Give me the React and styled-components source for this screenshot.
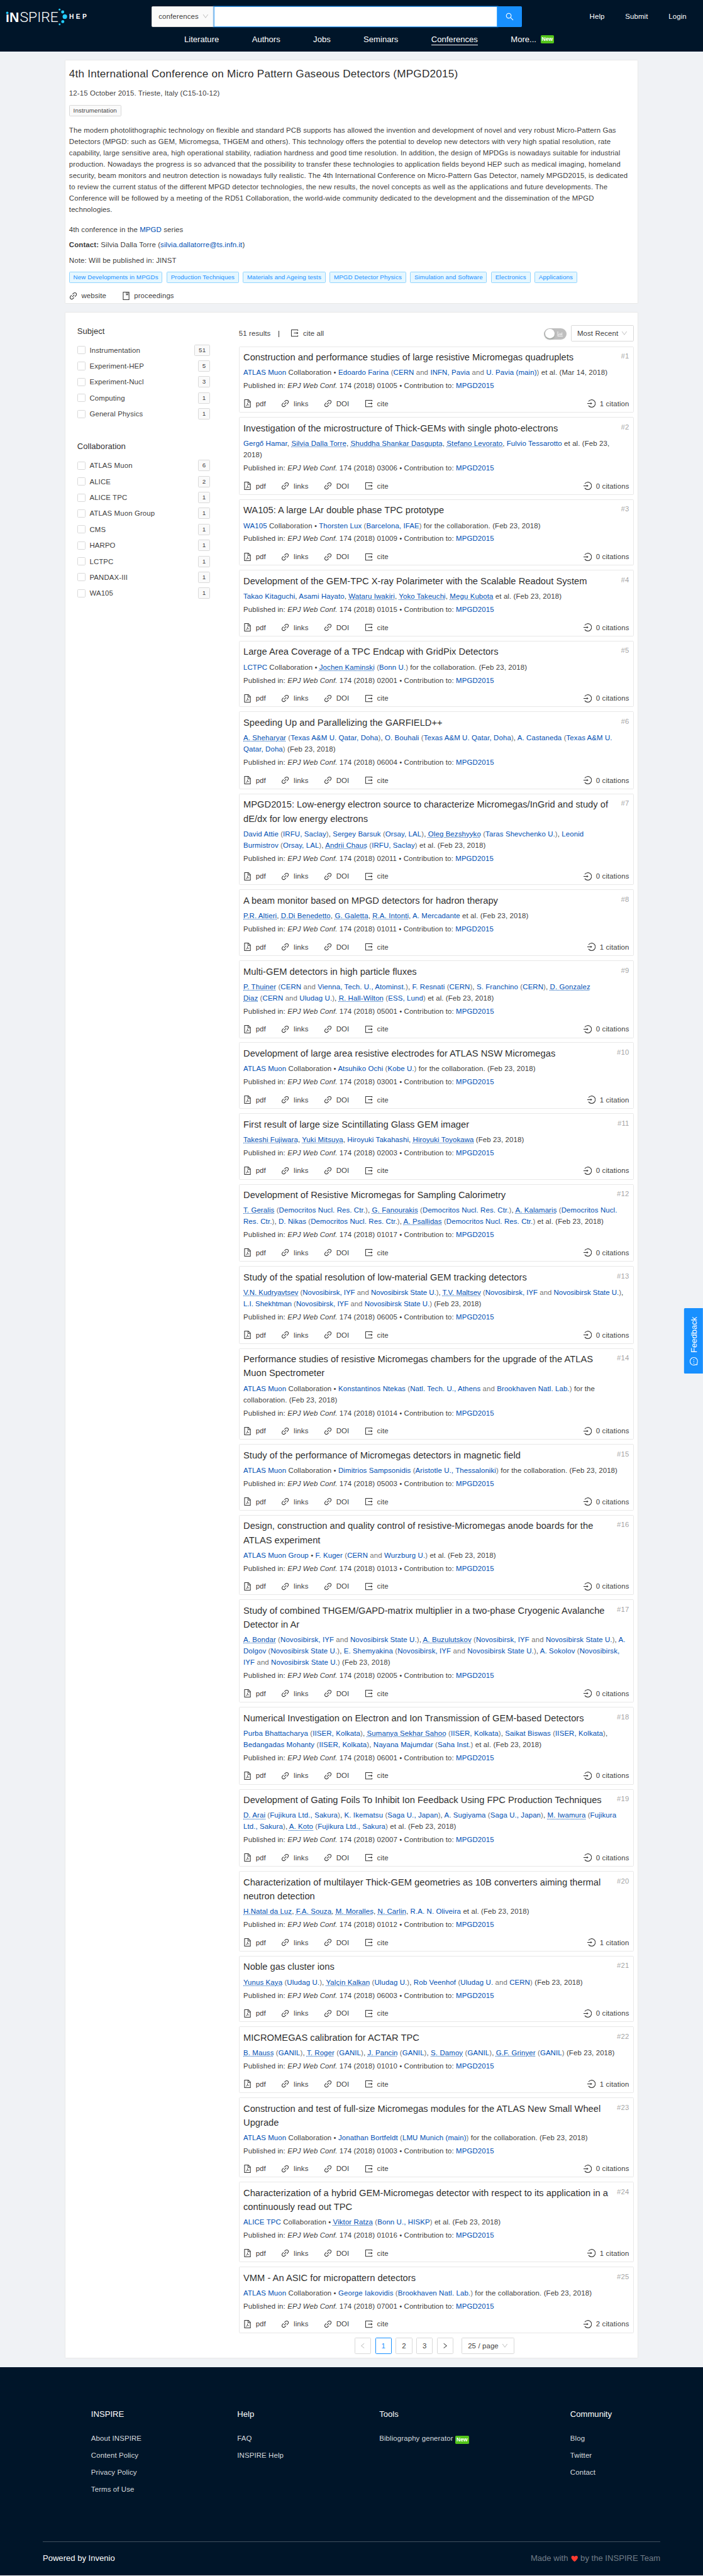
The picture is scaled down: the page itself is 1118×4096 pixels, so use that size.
import React from 'react';
import styled, { createGlobalStyle, css } from 'styled-components';
import {
  AiOutlineBarChart,
  AiOutlineBook,
  AiOutlineDown,
  AiOutlineFilePdf,
  AiOutlineLeft,
  AiOutlineLink,
  AiOutlineMessage,
  AiOutlineRight,
  AiOutlineSearch,
} from 'react-icons/ai';

const GlobalStyle = createGlobalStyle`
  html { background: #001529; }
  body { margin: 0; }
  *, *::before, *::after { box-sizing: border-box; }
`;

const text = 'rgba(0, 0, 0, 0.8)';
const heading = 'rgba(0, 0, 0, 0.85)';
const link = '#0050b3';
const navy = '#001529';
const primary = '#1890ff';

const Page = styled.div`
  zoom: 0.8185;
  position: relative;
  height: 5004px;
  overflow: hidden;
  background: #f0f2f5;
  color: ${text};
  font-family: 'Liberation Sans', Arial, sans-serif;
  font-size: 14px;
  letter-spacing: 0.13px;
  line-height: 22px;
`;

/* ---------- icons ---------- */

const iconBox = '64 64 896 896';
const cropped = (Icon) => () => <Icon viewBox={iconBox} />;

const ChartIcon = cropped(AiOutlineBarChart);
const BookIcon = cropped(AiOutlineBook);
const DownIcon = cropped(AiOutlineDown);
const PdfIcon = cropped(AiOutlineFilePdf);
const LeftIcon = cropped(AiOutlineLeft);
const LinkIcon = cropped(AiOutlineLink);
const MessageIcon = cropped(AiOutlineMessage);
const RightIcon = cropped(AiOutlineRight);
const SearchIcon = cropped(AiOutlineSearch);

const CiteIcon = () => (
  <svg viewBox={iconBox} fill="currentColor">
    <path d="M888.3 757.4h-53.8c-4.2 0-7.7 3.5-7.7 7.7v61.8H197.1V197.1h629.8v61.8c0 4.2 3.5 7.7 7.7 7.7h53.8c4.2 0 7.7-3.4 7.7-7.7V158.7c0-17-13.7-30.7-30.7-30.7H158.7c-17 0-30.7 13.7-30.7 30.7v706.6c0 17 13.7 30.7 30.7 30.7h706.6c17 0 30.7-13.7 30.7-30.7V765.1c0-4.3-3.5-7.7-7.7-7.7z" />
    <path d="M906.9 505.7L765 393.7c-5.3-4.2-13-.4-13 6.3v76H438c-4.4 0-8 3.6-8 8v56c0 4.4 3.6 8 8 8h314v76c0 6.7 7.8 10.5 13 6.3l141.9-112a8 8 0 0 0 0-12.6z" />
  </svg>
);

const CitationsIcon = () => (
  <svg viewBox="0 0 16 16" fill="none" stroke="currentColor" strokeWidth="1.35">
    <path d="M2.4 4A7.2 7.2 0 1 1 2.4 12" />
    <path d="M0 8h7" />
    <path d="M6.6 5.8L9.500 8 6.600 10.200z" fill="currentColor" stroke="none" />
  </svg>
);

/* ---------- header ---------- */

const Header = styled.header`
  display: grid;
  grid-template-columns: 295px 719px 1fr;
  grid-template-rows: 40px 1fr;
  height: 100px;
  padding-top: 12px;
  background: ${navy};
  color: #fff;
`;

const Logo = styled.svg`
  display: block;
  width: 180px;
  height: 60px;
  margin-top: -12px;
  letter-spacing: 0;
`;

const SearchBar = styled.form`
  display: flex;
  height: 40px;
`;

const ScopeSelect = styled.div`
  display: flex;
  align-items: center;
  justify-content: space-between;
  width: 121px;
  padding: 0 10px 0 12px;
  border: 1px solid #d9d9d9;
  border-radius: 2px 0 0 2px;
  background: #fafafa;
  color: ${text};
  svg { color: rgba(0, 0, 0, 0.25); font-size: 12px; }
`;

const SearchInput = styled.input`
  flex: 1;
  min-width: 0;
  border: 1px solid #40a9ff;
  outline: none;
  background: #fff;
  box-shadow: 0 0 0 2px rgba(24, 144, 255, 0.2);
`;

const SearchButton = styled.button`
  display: flex;
  align-items: center;
  justify-content: center;
  width: 48px;
  border: 0;
  border-radius: 0 2px 2px 0;
  background: ${primary};
  color: #fff;
  font-size: 16px;
`;

const UserLinks = styled.div`
  display: flex;
  justify-content: flex-end;
  align-items: center;
  gap: 40px;
  padding-right: 32px;
`;

const Nav = styled.nav`
  grid-column: 2;
  display: flex;
  gap: 64px;
  padding: 13.6px 0 0 63px;
  font-size: 16px;
  letter-spacing: 0;
  white-space: nowrap;
`;

const NavItem = styled.span`
  height: 22px;
  ${(p) => p.$active && css`border-bottom: 2px solid #fff;`}
`;

const NewTag = styled.span`
  display: inline-block;
  height: 16px;
  margin-left: ${(p) => p.$gap || 4}px;
  padding: 0 2.5px;
  border-radius: 2px;
  background: #52c41a;
  color: #fff;
  font-size: 10.6px;
  font-weight: 700;
  letter-spacing: 0;
  line-height: 16px;
  vertical-align: ${(p) => p.$shift || 0}px;
`;

/* ---------- shared ---------- */

const Panel = styled.section`
  margin: 16px 125.5px 0;
  border: 1px solid #e8e8e8;
  border-radius: 2px;
  background: #fff;
`;

const Link = styled.a`
  color: ${link};
  ${(p) => p.$dotted && css`text-decoration: underline dotted;`}
`;

const Tag = styled.span`
  display: inline-block;
  height: 22px;
  padding: 0 7px;
  border: 1px solid ${(p) => (p.$blue ? '#91d5ff' : '#d9d9d9')};
  border-radius: 2px;
  background: ${(p) => (p.$blue ? '#e6f7ff' : '#fafafa')};
  color: ${(p) => (p.$blue ? primary : text)};
  font-size: 12px;
  line-height: 19.5px;
  white-space: nowrap;
`;

const IconLabel = styled.span`
  display: inline-flex;
  align-items: center;
  gap: 8px;
  white-space: nowrap;
  svg { width: 16px; height: 16px; }
`;

/* ---------- conference ---------- */

const Conference = styled(Panel)`
  height: 474.5px;
  padding: 11.8px 7.5px 0;
`;

const ConferenceTitle = styled.h1`
  margin: 0;
  color: ${heading};
  font-size: 21px;
  font-weight: 400;
  letter-spacing: 0.22px;
  line-height: 28px;
`;

const Row = styled.div`
  display: flex;
  gap: ${(p) => p.$gap || 0}px;
  margin-top: ${(p) => p.$top}px;
`;

const Line = styled.p`
  margin: ${(p) => p.$top}px 0 0;
`;

/* ---------- results panel ---------- */

const ResultsPanel = styled(Panel)`
  display: flex;
  gap: 56px;
  height: 3975.3px;
  padding: 23.8px 8px 0 23.3px;
`;

const Sidebar = styled.aside`
  width: 258px;
  flex: none;
`;

const FacetTitle = styled.h2`
  margin: ${(p) => p.$top}px 0 14.6px;
  color: ${heading};
  font-size: 16px;
  font-weight: 400;
  letter-spacing: 0;
  line-height: 22px;
`;

const FacetItem = styled.label`
  display: flex;
  align-items: center;
  height: 22px;
  margin-bottom: 9px;
`;

const Checkbox = styled.span`
  width: 16px;
  height: 16px;
  margin-right: 8px;
  border: 1px solid #d9d9d9;
  border-radius: 2px;
  background: #fff;
`;

const FacetName = styled.span`
  flex: 1;
`;

const Results = styled.div`
  flex: 1;
  min-width: 0;
`;

const Toolbar = styled.div`
  display: flex;
  align-items: center;
  height: 32px;
  margin-bottom: 9.2px;
`;

const Divider = styled.i`
  width: 1px;
  height: 12.6px;
  margin: 2px 23px 0 15px;
  background: ${text};
`;

const Switch = styled.span`
  display: flex;
  align-items: center;
  justify-content: space-between;
  width: 44px;
  height: 22px;
  margin: 2px 8px 0 auto;
  padding: 0 7px 0 2px;
  border-radius: 11px;
  background: #bfbfbf;
  color: #fff;
  font-size: 12px;
  &::before {
    content: '';
    width: 18px;
    height: 18px;
    border-radius: 50%;
    background: #fff;
    box-shadow: 0 2px 4px rgba(0, 35, 11, 0.2);
  }
`;

const Select = styled.div`
  display: flex;
  align-items: center;
  justify-content: space-between;
  width: ${(p) => p.$width}px;
  height: 32px;
  padding: 0 11px;
  border: 1px solid #d9d9d9;
  border-radius: 2px;
  white-space: nowrap;
  svg { color: rgba(0, 0, 0, 0.25); font-size: 12px; }
`;

const Card = styled.article`
  height: ${(p) => p.$height}px;
  margin-bottom: 8.5px;
  padding: 7px 7.6px 0;
  border: 1px solid #e8e8e8;
  border-radius: 2px;
`;

const CardHead = styled.div`
  display: flex;
  justify-content: space-between;
  gap: 14px;
`;

const CardTitle = styled.h3`
  margin: 0;
  color: ${heading};
  font-size: 18px;
  font-weight: 400;
  letter-spacing: 0;
  line-height: 27px;
`;

const Rank = styled.span`
  color: rgba(0, 0, 0, 0.4);
`;

const Authors = styled.div`
  margin-top: 5px;
  margin-right: -3px;
  white-space: pre-line;
  ${(p) => p.$tight && css`letter-spacing: 0;`}
`;

const Affiliation = styled.span`
  color: rgba(0, 0, 0, 0.6);
`;

const Published = styled.div`
  margin-top: 3.6px;
`;

const Actions = styled.div`
  display: flex;
  height: 22px;
  margin-top: 13px;
`;

const Action = styled(IconLabel)`
  margin-right: ${(p) => p.$after || 0}px;
  &:last-child { margin-left: auto; }
`;

const Pagination = styled.div`
  display: flex;
  gap: 8px;
  padding-left: 225px;
`;

const PageButton = styled.span`
  display: flex;
  align-items: center;
  justify-content: center;
  width: 32px;
  height: 32px;
  border: 1px solid ${(p) => (p.$active ? primary : '#d9d9d9')};
  border-radius: 2px;
  color: ${(p) => (p.$active ? primary : p.$disabled ? 'rgba(0,0,0,.25)' : text)};
  svg { font-size: 12px; }
  &:nth-child(5) { margin-right: 8px; }
`;

/* ---------- feedback & footer ---------- */

const Feedback = styled.button`
  position: absolute;
  top: 2587px;
  right: -45px;
  display: flex;
  align-items: center;
  justify-content: center;
  gap: 8px;
  width: 127px;
  height: 37px;
  padding: 0;
  border: 0;
  border-radius: 2px 2px 0 0;
  background: ${primary};
  color: #fff;
  font: 16px 'Liberation Sans', Arial, sans-serif;
  transform: rotate(-90deg);
  svg { width: 16px; height: 16px; }
`;

const Footer = styled.footer`
  height: 405px;
  margin-top: 16.7px;
  padding: 81px 83px 0;
  background: ${navy};
  color: #fff;
`;

const FooterColumns = styled.div`
  display: grid;
  grid-template-columns: 284px 276px 371px 1fr;
  height: 259px;
  padding-left: 94px;
  border-bottom: 1px solid rgba(255, 255, 255, 0.25);
`;

const FooterTitle = styled.h2`
  margin: 0 0 24.5px;
  font-size: 16px;
  font-weight: 400;
  letter-spacing: 0;
  line-height: 22px;
`;

const FooterLink = styled.div`
  margin-bottom: 11px;
  color: rgba(255, 255, 255, 0.85);
`;

const FooterBottom = styled.div`
  display: flex;
  justify-content: space-between;
  padding-top: 21px;
  font-size: 16px;
  letter-spacing: 0;
`;

const Muted = styled.span`
  color: rgba(255, 255, 255, 0.45);
`;

const Heart = styled.svg`
  width: 14px;
  height: 13px;
  margin: 0 5px;
  vertical-align: -1px;
`;

/* ---------- data ---------- */

const abstract =
  'The modern photolithographic technology on flexible and standard PCB supports has allowed the invention and development of novel and very robust Micro-Pattern Gas Detectors (MPGD: such as GEM, Micromegsa, THGEM and others). This technology offers the potential to develop new detectors with very high spatial resolution, rate capability, large sensitive area, high operational stability, radiation hardness and good time resolution. In addition, the design of MPDGs is nowadays suitable for industrial production. Nowadays the progress is so advanced that the possibility to transfer these technologies to application fields beyond HEP such as medical imaging, homeland security, beam monitors and neutron detection is nowadays fully realistic. The 4th International Conference on Micro-Pattern Gas Detector, namely MPGD2015, is dedicated to review the current status of the different MPGD detector technologies, the new results, the novel concepts as well as the applications and future developments. The Conference will be followed by a meeting of the RD51 Collaboration, the world-wide community dedicated to the development and the dissemination of the MPGD technologies.';

const keywords = [
  'New Developments in MPGDs', 'Production Techniques', 'Materials and Ageing tests',
  'MPGD Detector Physics', 'Simulation and Software', 'Electronics', 'Applications',
];

const facets = [
  { title: 'Subject', items: [['Instrumentation', 51], ['Experiment-HEP', 5], ['Experiment-Nucl', 3], ['Computing', 1], ['General Physics', 1]] },
  {
    title: 'Collaboration',
    items: [['ATLAS Muon', 6], ['ALICE', 2], ['ALICE TPC', 1], ['ATLAS Muon Group', 1], ['CMS', 1], ['HARPO', 1], ['LCTPC', 1], ['PANDAX-III', 1], ['WA105', 1]],
  },
];

const NSK = ['Novosibirsk, IYF', 'Novosibirsk State U.'];
const DEM = ['Democritos Nucl. Res. Ctr.'];
const QATAR = ['Texas A&M U. Qatar, Doha'];
const KOL = ['IISER, Kolkata'];
const FUJ = ['Fujikura Ltd., Sakura'];
const SAGA = ['Saga U., Japan'];
const ETAL = 'et al.';
const FOR = 'for the collaboration.';

// Author names that start with "*" carry a dotted underline.
// tl / al: number of lines taken by the title and by the authors.
const papers = [
  { t: 'Construction and performance studies of large resistive Micromegas quadruplets', c: 'ATLAS Muon', a: [['Edoardo Farina', ['CERN', 'INFN, Pavia', 'U. Pavia (main)']]], s: ETAL, d: 'Mar 14, 2018', p: '01005', n: 1 },
  { t: 'Investigation of the microstructure of Thick-GEMs with single photo-electrons', a: [['Gergő Hamar'], ['*Silvia Dalla Torre'], ['*Shuddha Shankar Dasgupta'], ['*Stefano Levorato'], ['Fulvio Tessarotto']], s: ETAL, d: 'Feb 23,\n2018', p: '03006', n: 0, al: 2 },
  { t: 'WA105: A large LAr double phase TPC prototype', c: 'WA105', a: [['Thorsten Lux', ['Barcelona, IFAE']]], s: FOR, p: '01009', n: 0 },
  { t: 'Development of the GEM-TPC X-ray Polarimeter with the Scalable Readout System', a: [['Takao Kitaguchi'], ['Asami Hayato'], ['*Wataru Iwakiri'], ['*Yoko Takeuchi'], ['*Megu Kubota']], s: ETAL, p: '01015', n: 0 },
  { t: 'Large Area Coverage of a TPC Endcap with GridPix Detectors', c: 'LCTPC', a: [['*Jochen Kaminski', ['Bonn U.']]], s: FOR, p: '02001', n: 0 },
  { t: 'Speeding Up and Parallelizing the GARFIELD++', a: [['*A. Sheharyar', QATAR], ['O. Bouhali', QATAR], ['A. Castaneda', QATAR]], p: '06004', n: 0, al: 2 },
  { t: 'MPGD2015: Low-energy electron source to characterize Micromegas/InGrid and study of dE/dx for low energy electrons', a: [['David Attie', ['IRFU, Saclay']], ['Sergey Barsuk', ['Orsay, LAL']], ['*Oleg Bezshyyko', ['Taras Shevchenko U.']], ['Leonid Burmistrov', ['Orsay, LAL']], ['*Andrii Chaus', ['IRFU, Saclay']]], s: ETAL, p: '02011', n: 0, tl: 2, al: 2 },
  { t: 'A beam monitor based on MPGD detectors for hadron therapy', a: [['*P.R. Altieri'], ['*D.Di Benedetto'], ['*G. Galetta'], ['*R.A. Intonti'], ['A. Mercadante']], s: ETAL, p: '01011', n: 1 },
  { t: 'Multi-GEM detectors in high particle fluxes', a: [['*P. Thuiner', ['CERN', 'Vienna, Tech. U., Atominst.']], ['F. Resnati', ['CERN']], ['S. Franchino', ['CERN']], ['*D. Gonzalez Diaz', ['CERN', 'Uludag U.']], ['*R. Hall-Wilton', ['ESS, Lund']]], s: ETAL, p: '05001', n: 0, al: 2 },
  { t: 'Development of large area resistive electrodes for ATLAS NSW Micromegas', c: 'ATLAS Muon', a: [['Atsuhiko Ochi', ['Kobe U.']]], s: FOR, p: '03001', n: 1 },
  { t: 'First result of large size Scintillating Glass GEM imager', a: [['*Takeshi Fujiwara'], ['*Yuki Mitsuya'], ['Hiroyuki Takahashi'], ['*Hiroyuki Toyokawa']], p: '02003', n: 0 },
  { t: 'Development of Resistive Micromegas for Sampling Calorimetry', a: [['*T. Geralis', DEM], ['*G. Fanourakis', DEM], ['*A. Kalamaris', DEM], ['D. Nikas', DEM], ['*A. Psallidas', DEM]], s: ETAL, p: '01017', n: 0, al: 2 },
  { t: 'Study of the spatial resolution of low-material GEM tracking detectors', a: [['*V.N. Kudryavtsev', NSK], ['*T.V. Maltsev', NSK], ['L.I. Shekhtman', NSK]], p: '06005', n: 0, al: 2, tight: true },
  { t: 'Performance studies of resistive Micromegas chambers for the upgrade of the ATLAS Muon Spectrometer', c: 'ATLAS Muon', a: [['Konstantinos Ntekas', ['Natl. Tech. U., Athens', 'Brookhaven Natl. Lab.']]], s: FOR, p: '01014', n: 0, tl: 2, al: 2 },
  { t: 'Study of the performance of Micromegas detectors in magnetic field', c: 'ATLAS Muon', a: [['Dimitrios Sampsonidis', ['Aristotle U., Thessaloniki']]], s: FOR, p: '05003', n: 0 },
  { t: 'Design, construction and quality control of resistive-Micromegas anode boards for the ATLAS experiment', g: 'ATLAS Muon Group', a: [['F. Kuger', ['CERN', 'Wurzburg U.']]], s: ETAL, p: '01013', n: 0, tl: 2 },
  { t: 'Study of combined THGEM/GAPD-matrix multiplier in a two-phase Cryogenic Avalanche Detector in Ar', a: [['*A. Bondar', NSK], ['*A. Buzulutskov', NSK], ['A. Dolgov', ['Novosibirsk State U.']], ['E. Shemyakina', NSK], ['A. Sokolov', NSK]], p: '02005', n: 0, tl: 2, al: 3 },
  { t: 'Numerical Investigation on Electron and Ion Transmission of GEM-based Detectors', a: [['Purba Bhattacharya', KOL], ['*Sumanya Sekhar Sahoo', KOL], ['Saikat Biswas', KOL], ['Bedangadas Mohanty', KOL], ['Nayana Majumdar', ['Saha Inst.']]], s: ETAL, p: '06001', n: 0, al: 2 },
  { t: 'Development of Gating Foils To Inhibit Ion Feedback Using FPC Production Techniques', a: [['*D. Arai', FUJ], ['K. Ikematsu', SAGA], ['A. Sugiyama', SAGA], ['*M. Iwamura', FUJ], ['*A. Koto', FUJ]], s: ETAL, p: '02007', n: 0, al: 2 },
  { t: 'Characterization of multilayer Thick-GEM geometries as 10B converters aiming thermal neutron detection', a: [['*H.Natal da Luz'], ['*F.A. Souza'], ['*M. Moralles'], ['*N. Carlin'], ['R.A. N. Oliveira']], s: ETAL, p: '01012', n: 1, tl: 2 },
  { t: 'Noble gas cluster ions', a: [['*Yunus Kaya', ['Uludag U.']], ['*Yalçin Kalkan', ['Uludag U.']], ['Rob Veenhof', ['Uludag U.', 'CERN']]], p: '06003', n: 0 },
  { t: 'MICROMEGAS calibration for ACTAR TPC', a: [['*B. Mauss', ['GANIL']], ['*T. Roger', ['GANIL']], ['*J. Pancin', ['GANIL']], ['*S. Damoy', ['GANIL']], ['*G.F. Grinyer', ['GANIL']]], p: '01010', n: 1 },
  { t: 'Construction and test of full-size Micromegas modules for the ATLAS New Small Wheel Upgrade', c: 'ATLAS Muon', a: [['Jonathan Bortfeldt', ['LMU Munich (main)']]], s: FOR, p: '01003', n: 0, tl: 2 },
  { t: 'Characterization of a hybrid GEM-Micromegas detector with respect to its application in a continuously read out TPC', c: 'ALICE TPC', a: [['*Viktor Ratza', ['Bonn U., HISKP']]], s: ETAL, p: '01016', n: 1, tl: 2 },
  { t: 'VMM - An ASIC for micropattern detectors', c: 'ATLAS Muon', a: [['George Iakovidis', ['Brookhaven Natl. Lab.']]], s: FOR, p: '07001', n: 2 },
];

const footerColumns = [
  ['INSPIRE', ['About INSPIRE', 'Content Policy', 'Privacy Policy', 'Terms of Use']],
  ['Help', ['FAQ', 'INSPIRE Help']],
  ['Tools', ['Bibliography generator']],
  ['Community', ['Blog', 'Twitter', 'Contact']],
];

/* ---------- components ---------- */

function InspireLogo() {
  return (
    <Logo viewBox="0 0 180 60">
      <g fill="#fff" fontFamily="'Liberation Sans', Arial, sans-serif">
        <text x="11" y="42.6" fontSize="26.5" fontWeight="700" textLength="26" lengthAdjust="spacingAndGlyphs">iN</text>
        <text x="38.5" y="42.6" fontSize="27" fontWeight="300" fontFamily="Roboto, sans-serif" textLength="75" lengthAdjust="spacingAndGlyphs">SPIRE</text>
        <text x="134.4" y="36.7" fontSize="12.6" fontWeight="700" textLength="34" lengthAdjust="spacing">HEP</text>
      </g>
      <rect x="11" y="22" width="6.4" height="5.8" fill={navy} />
      <g fill="#22ccff">
        <circle cx="14.1" cy="25" r="2.3" />
        <circle cx="115.7" cy="18.6" r="1.8" />
        <circle cx="121.8" cy="23.3" r="3" />
        <circle cx="126" cy="32.3" r="4.4" />
        <circle cx="122" cy="42" r="3" />
        <circle cx="115.8" cy="47.4" r="1.8" />
      </g>
    </Logo>
  );
}

function Author({ name, affiliations }) {
  const dotted = name.startsWith('*');
  return (
    <>
      <Link $dotted={dotted}>{dotted ? name.slice(1) : name}</Link>
      {affiliations && (
        <Affiliation>
          {'\u00a0('}
          {affiliations.map((item, i) => (
            <React.Fragment key={item}>
              {i > 0 && ' and '}
              <Link>{item}</Link>
            </React.Fragment>
          ))}
          )
        </Affiliation>
      )}
    </>
  );
}

function Paper({ paper, rank }) {
  const { t, c, g, a, s, d = 'Feb 23, 2018', p, n, tl = 1, al = 1, tight } = paper;
  return (
    <Card $height={129 + (tl - 1) * 27 + (al - 1) * 22}>
      <CardHead>
        <CardTitle>{t}</CardTitle>
        <Rank>#{rank}</Rank>
      </CardHead>
      <Authors $tight={tight}>
        {c && <><Link>{c}</Link> Collaboration • </>}
        {g && <><Link>{g}</Link> • </>}
        {a.map(([name, affiliations], i) => (
          <React.Fragment key={name}>
            {i > 0 && ', '}
            <Author name={name} affiliations={affiliations} />
          </React.Fragment>
        ))}
        {s && ` ${s}`} ({d})
      </Authors>
      <Published>
        Published in: <em>EPJ Web Conf.</em> 174 (2018) {p} • Contribution to: <Link>MPGD2015</Link>
      </Published>
      <Actions>
        <Action $after={30}><PdfIcon />pdf</Action>
        <Action $after={30}><LinkIcon />links</Action>
        <Action $after={30}><LinkIcon />DOI</Action>
        <Action><CiteIcon />cite</Action>
        <Action><CitationsIcon />{`${n} ${n === 1 ? 'citation' : 'citations'}`}</Action>
      </Actions>
    </Card>
  );
}

export default function App() {
  return (
    <Page>
      <GlobalStyle />
      <Header>
        <InspireLogo />
        <SearchBar>
          <ScopeSelect>conferences<DownIcon /></ScopeSelect>
          <SearchInput />
          <SearchButton type="button"><SearchIcon /></SearchButton>
        </SearchBar>
        <UserLinks><span>Help</span><span>Submit</span><span>Login</span></UserLinks>
        <Nav>
          <NavItem>Literature</NavItem>
          <NavItem>Authors</NavItem>
          <NavItem>Jobs</NavItem>
          <NavItem>Seminars</NavItem>
          <NavItem $active>Conferences</NavItem>
          <NavItem>More...<NewTag $gap={8} $shift={2}>New</NewTag></NavItem>
        </Nav>
      </Header>

      <Conference>
        <ConferenceTitle>4th International Conference on Micro Pattern Gaseous Detectors (MPGD2015)</ConferenceTitle>
        <Line $top={13}>12-15 October 2015. Trieste, Italy (C15-10-12)</Line>
        <Row $top={12}><Tag>Instrumentation</Tag></Row>
        <Line $top={16.5}>{abstract}</Line>
        <Line $top={16}>4th conference in the <Link>MPGD</Link> series</Line>
        <Line $top={8}><b>Contact:</b> Silvia Dalla Torre (<Link>silvia.dallatorre@ts.infn.it</Link>)</Line>
        <Line $top={8}>Note: Will be published in: JINST</Line>
        <Row $top={11.5} $gap={8}>{keywords.map((k) => <Tag key={k} $blue>{k}</Tag>)}</Row>
        <Row $top={13.5} $gap={30}>
          <IconLabel><LinkIcon />website</IconLabel>
          <IconLabel><BookIcon />proceedings</IconLabel>
        </Row>
      </Conference>

      <ResultsPanel>
        <Sidebar>
          {facets.map((facet, i) => (
            <div key={facet.title}>
              <FacetTitle $top={i ? 42 : 1}>{facet.title}</FacetTitle>
              {facet.items.map(([name, count]) => (
                <FacetItem key={name}>
                  <Checkbox />
                  <FacetName>{name}</FacetName>
                  <Tag>{count}</Tag>
                </FacetItem>
              ))}
            </div>
          ))}
        </Sidebar>
        <Results>
          <Toolbar>
            <span>51 results</span>
            <Divider />
            <IconLabel><CiteIcon />cite all</IconLabel>
            <Switch><ChartIcon /></Switch>
            <Select $width={122}>Most Recent<DownIcon /></Select>
          </Toolbar>
          {papers.map((paper, i) => <Paper key={paper.p} paper={paper} rank={i + 1} />)}
          <Pagination>
            <PageButton $disabled><LeftIcon /></PageButton>
            <PageButton $active>1</PageButton>
            <PageButton>2</PageButton>
            <PageButton>3</PageButton>
            <PageButton><RightIcon /></PageButton>
            <Select $width={102}>25 / page<DownIcon /></Select>
          </Pagination>
        </Results>
      </ResultsPanel>

      <Footer>
        <FooterColumns>
          {footerColumns.map(([title, links]) => (
            <div key={title}>
              <FooterTitle>{title}</FooterTitle>
              {links.map((item) => (
                <FooterLink key={item}>
                  {item}
                  {title === 'Tools' && <NewTag $shift={-1}>New</NewTag>}
                </FooterLink>
              ))}
            </div>
          ))}
        </FooterColumns>
        <FooterBottom>
          <span>Powered by Invenio</span>
          <Muted>
            Made with
            <Heart viewBox="0 0 14 13">
              <path fill="#ff3b30" d="M7 12.6C4.5 10.4.6 7.5.6 4.2.6 2.1 2 .8 3.7.8 5.2.8 6.4 1.7 7 3 7.6 1.7 8.800.8 10.300.8 12 .8 13.400 2.100 13.400 4.200 13.400 7.500 9.500 10.400 7 12.600z" />
            </Heart>
            by the INSPIRE Team
          </Muted>
        </FooterBottom>
      </Footer>

      <Feedback type="button"><MessageIcon />Feedback</Feedback>
    </Page>
  );
}
